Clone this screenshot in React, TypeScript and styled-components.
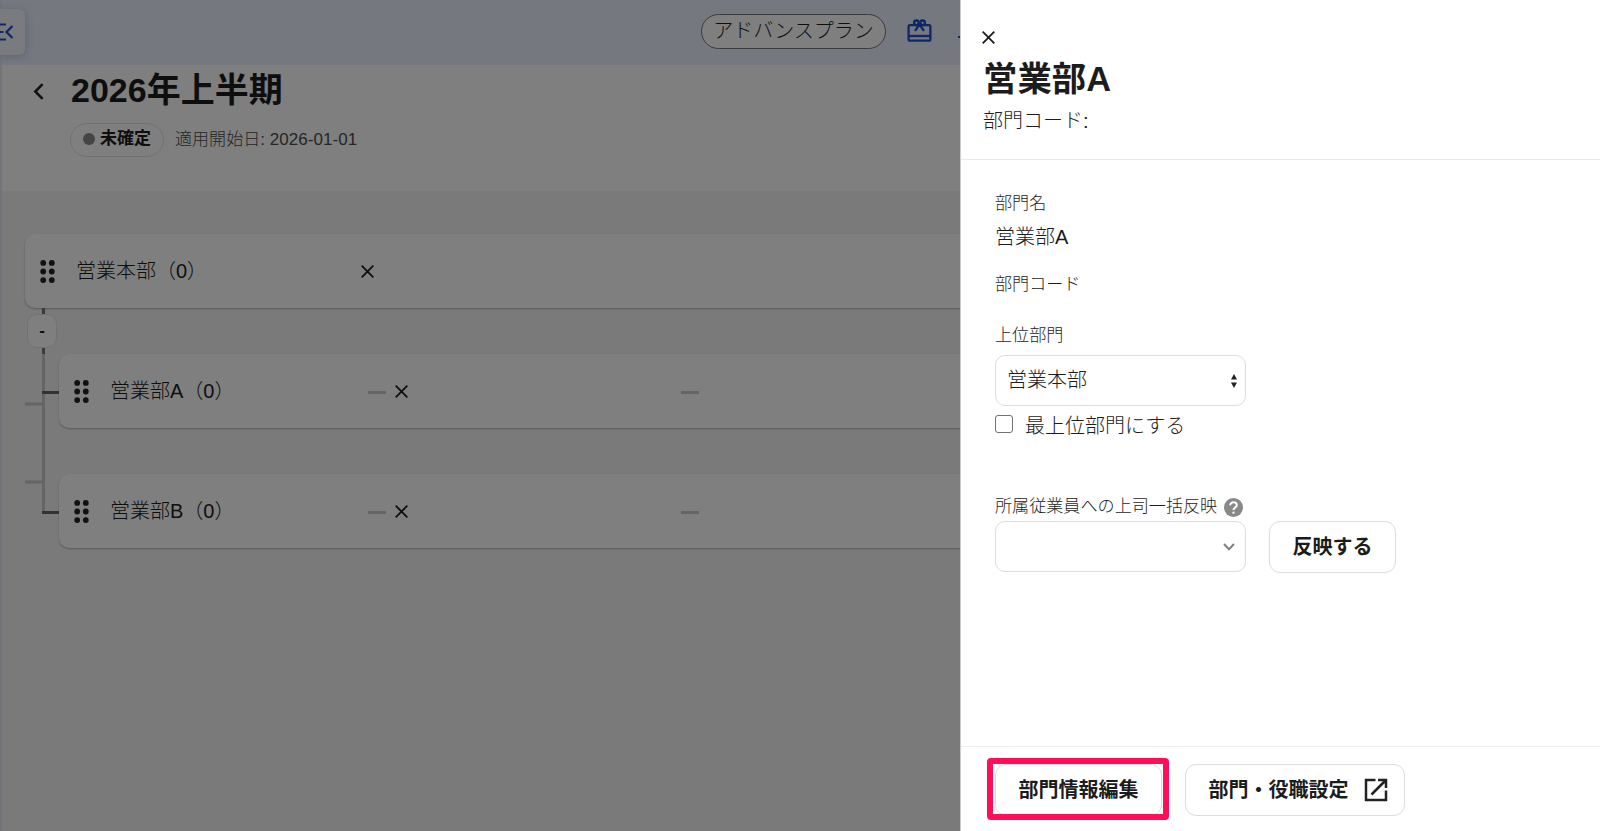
import React from 'react';
import styled, { createGlobalStyle } from 'styled-components';

const GlobalStyle = createGlobalStyle`
  * { box-sizing: border-box; }
  body {
    margin: 0;
    overflow: hidden;
    color: #1c1c1c;
    font-family: "Liberation Sans", "Noto Sans CJK JP", sans-serif;
    font-size: 20px;
    font-weight: 300;
  }
  h1, h2, p { margin: 0; }
  svg { display: block; flex: none; }
  button, select, input { font: inherit; color: inherit; }
`;

const Screen = styled.div`
  position: relative;
  height: 831px;
  overflow: hidden;
`;

const Page = styled.div`
  display: flex;
  flex-direction: column;
  height: 831px;
  background: #f4f4f4;
  border-left: 2px solid #e6e8f2;
`;

const TopBar = styled.header`
  display: flex;
  flex: none;
  align-items: flex-start;
  height: 65px;
  background: #eaf0ff;
`;

const MenuTab = styled.button`
  display: flex;
  align-items: center;
  width: 25px;
  height: 46px;
  margin: 9px 0 0 -2px;
  padding: 0;
  border: 0;
  border-radius: 0 6px 6px 0;
  background: #f5f7ff;
  box-shadow: 1px 2px 8px rgba(40, 50, 90, 0.2);
  overflow: hidden;
`;

const PlanBadge = styled.span`
  width: 185px;
  height: 35px;
  margin: 14px 0 0 676px;
  border: 1px solid #777;
  border-radius: 18px;
  background: #fff;
  line-height: 32px;
  text-align: center;
`;

const BarIcon = styled.span<{ $left: number; $top: number }>`
  flex: none;
  margin: ${(p) => p.$top}px 0 0 ${(p) => p.$left}px;
`;

const BarMark = styled.span`
  flex: none;
  width: 20px;
  height: 2px;
  margin: 36px 0 0 26px;
  background: #1b4ed0;
`;

const Heading = styled.section`
  display: flex;
  flex: none;
  height: 126px;
  padding: 1px 0 0 31px;
  background: #fff;
`;

const HeadingBody = styled.div`
  margin-left: 27px;
`;

const PeriodTitle = styled.h1`
  height: 48px;
  font-size: 34px;
  font-weight: 700;
  line-height: 48px;
`;

const BackIcon = styled.svg`
  margin-top: 17px;
`;

const Meta = styled.div`
  display: flex;
  align-items: center;
  gap: 11px;
  height: 34px;
  margin: 9px 0 0 -1px;
  color: #4c4c4c;
  font-size: 17px;
`;

const StartDate = styled.span`
  padding-bottom: 5px;
  letter-spacing: 0.05px;
`;

const StatusBadge = styled.span`
  display: flex;
  align-items: center;
  gap: 5px;
  width: 94px;
  height: 34px;
  padding: 0 0 2px 12px;
  border: 1px solid #e2e2e2;
  border-radius: 17px;
  color: #1c1c1c;
  font-weight: 700;
  line-height: 28px;

  &::before {
    content: '';
    width: 12px;
    height: 12px;
    border-radius: 50%;
    background: #8c8989;
  }
`;

const Tree = styled.main`
  padding: 43px 0 0 23px;
`;

const Branch = styled.div`
  display: flex;
`;

const Gutter = styled.div`
  width: 34px;
  padding-left: 2px;
`;

const Stub = styled.div`
  width: 3px;
  height: 6px;
  margin-left: 15px;
  background: #777;
`;

const Toggle = styled.button`
  display: block;
  width: 30px;
  height: 34px;
  padding: 0;
  border: 1px solid #e4e4e4;
  border-radius: 10px;
  background: #fff;
  font-size: 17px;
  font-weight: 700;
  line-height: 32px;
`;

const Connector = styled.svg`
  margin-left: -2px;
`;

const Children = styled.div`
  display: flex;
  flex: 1;
  flex-direction: column;
  gap: 46px;
  padding-top: 46px;
`;

const NodeCard = styled.div`
  display: flex;
  align-items: center;
  height: 74px;
  padding-left: 15px;
  border-radius: 10px;
  background: #fff;
  box-shadow: 0 1px 2px rgba(0, 0, 0, 0.28);
`;

const NodeName = styled.span<{ $width: number }>`
  width: ${(p) => p.$width}px;
  margin-left: 21px;
  line-height: 30px;
  padding-bottom: 1px;
`;

const Dash = styled.span<{ $left?: number }>`
  width: 18px;
  height: 3px;
  margin: 2px 0 0 ${(p) => p.$left ?? 0}px;
  background: #cacaca;
`;

const RemoveIcon = styled.span<{ $left?: number }>`
  margin-left: ${(p) => p.$left ?? 0}px;
`;

const Backdrop = styled.div`
  position: absolute;
  inset: 0;
  background: rgba(0, 0, 0, 0.5);
`;

const Drawer = styled.aside`
  position: absolute;
  top: 0;
  right: 0;
  display: flex;
  flex-direction: column;
  width: 640px;
  height: 831px;
  border-left: 1px solid #ccc;
  background: #fff;
`;

const DrawerHead = styled.header`
  flex: none;
  height: 160px;
  padding: 31px 0 0 21px;
  border-bottom: 1px solid #e9e9e9;
`;

const DrawerTitle = styled.h2`
  margin: 10px 0 0 1px;
  font-size: 34.4px;
  font-weight: 700;
  line-height: 50px;
`;

const DrawerCode = styled.p`
  margin: 2px 0 0 1px;
  line-height: 30px;
`;

const DrawerBody = styled.div`
  flex: 1;
  padding: 31px 0 0 34px;
`;

const Label = styled.div<{ $top?: number }>`
  display: flex;
  align-items: center;
  gap: 7px;
  height: 26px;
  margin-top: ${(p) => p.$top ?? 0}px;
  font-size: 17.1px;
  line-height: 26px;
`;

const Value = styled.p`
  margin-top: 5px;
  line-height: 30px;
`;

const SelectBox = styled.div<{ $end: number; $top: number }>`
  display: flex;
  align-items: center;
  justify-content: space-between;
  width: 251px;
  height: 51px;
  margin-top: ${(p) => p.$top}px;
  padding: 0 ${(p) => p.$end}px 0 11px;
  border: 1px solid #ddd;
  border-radius: 10px;
  line-height: 46px;

  span { padding-bottom: 2px; }
`;

const CheckLine = styled.label`
  display: flex;
  align-items: center;
  gap: 12px;
  height: 30px;
  margin-top: 5px;
  line-height: 30px;
`;

const Checkbox = styled.input`
  appearance: none;
  width: 18px;
  height: 18px;
  margin: 0 0 4px;
  border: 1.5px solid #707070;
  border-radius: 3px;
`;

const ApplyLine = styled.div`
  display: flex;
  gap: 23px;
  margin-top: 1px;
`;

const Button = styled.button<{ $width: number; $shift?: number }>`
  display: flex;
  align-items: center;
  justify-content: center;
  gap: 15px;
  width: ${(p) => p.$width}px;
  height: 52px;
  padding: 0 0 1px ${(p) => p.$shift ?? 0}px;
  border: 1px solid #ddd;
  border-radius: 11px;
  background: #fff;
  font-weight: 700;
  line-height: 30px;
`;

const DrawerFoot = styled.footer`
  display: flex;
  flex: none;
  align-items: flex-start;
  gap: 23px;
  height: 85px;
  padding: 17px 0 0 34px;
  border-top: 1px solid #eee;
`;

const Highlight = styled.div`
  position: relative;

  &::after {
    content: '';
    position: absolute;
    inset: -6px -7px -4px -8px;
    border: 6px solid #ff0f57;
    border-radius: 4px;
  }
`;

const Cross = () => (
  <svg width="13" height="13" viewBox="0 0 13 13" stroke="#1c1c1c" strokeWidth="1.8">
    <path d="M.7.7 12.3 12.3M12.3.7.7 12.3" />
  </svg>
);

const Grip = () => (
  <svg width="15" height="23" viewBox="0 0 15 23" fill="#222">
    {[2.9, 11.5, 20.1].map((y) => (
      <React.Fragment key={y}>
        <circle cx="3.2" cy={y} r="2.9" />
        <circle cx="11.8" cy={y} r="2.9" />
      </React.Fragment>
    ))}
  </svg>
);

const ChildNode = ({ name }: { name: string }) => (
  <NodeCard>
    <Grip />
    <NodeName $width={258}>{name}</NodeName>
    <Dash />
    <RemoveIcon $left={9}>
      <Cross />
    </RemoveIcon>
    <Dash $left={273} />
  </NodeCard>
);

export default function App() {
  return (
    <Screen>
      <GlobalStyle />
      <Page>
        <TopBar>
          <MenuTab aria-label="メニュー">
            <svg width="14" height="18" viewBox="0 0 14 18" fill="none" stroke="#1b4ed0" strokeWidth="2.2">
              <path d="M0 1.5H6M0 9H3.5M0 16.5H6M12.5 3 6.5 9l6 6" />
            </svg>
          </MenuTab>
          <PlanBadge>アドバンスプラン</PlanBadge>
          <BarIcon $left={21} $top={19}>
            <svg width="25" height="24" viewBox="0 0 25 24" fill="none" stroke="#1b4ed0" strokeWidth="2.3">
              <rect x="1.6" y="6.2" width="21.8" height="15.5" rx="1.5" />
              <path d="M1.6 17H23.4" />
              <circle cx="9.4" cy="3.8" r="2.3" />
              <circle cx="15.6" cy="3.8" r="2.3" />
              <path d="M12.5 5.5 8 11.8M12.5 5.5 17 11.8" />
            </svg>
          </BarIcon>
          <BarMark />
        </TopBar>
        <Heading>
          <BackIcon width="11" height="17" viewBox="0 0 11 17" fill="none" stroke="#222" strokeWidth="2.6">
            <path d="M9.6 1.2 2.3 8.5l7.3 7.3" />
          </BackIcon>
          <HeadingBody>
            <PeriodTitle>2026年上半期</PeriodTitle>
            <Meta>
              <StatusBadge>未確定</StatusBadge>
              <StartDate>適用開始日: 2026-01-01</StartDate>
            </Meta>
          </HeadingBody>
        </Heading>
        <Tree>
          <NodeCard>
            <Grip />
            <NodeName $width={285}>営業本部（0）</NodeName>
            <Cross />
          </NodeCard>
          <Branch>
            <Gutter>
              <Stub />
              <Toggle>-</Toggle>
              <Stub />
              <Connector width="34" height="162" viewBox="0 0 34 162" fill="none" strokeWidth="3">
                <path d="M18.5 0V157M0 50H17M0 128H17" stroke="#cacaca" />
                <path d="M17 38.5H34M17 158.5H34" stroke="#666" />
              </Connector>
            </Gutter>
            <Children>
              <ChildNode name="営業部A（0）" />
              <ChildNode name="営業部B（0）" />
            </Children>
          </Branch>
        </Tree>
      </Page>
      <Backdrop />
      <Drawer>
        <DrawerHead>
          <Cross />
          <DrawerTitle>営業部A</DrawerTitle>
          <DrawerCode>部門コード:</DrawerCode>
        </DrawerHead>
        <DrawerBody>
          <Label>部門名</Label>
          <Value>営業部A</Value>
          <Label $top={20}>部門コード</Label>
          <Label $top={25}>上位部門</Label>
          <SelectBox $end={8} $top={6}>
            <span>営業本部</span>
            <svg width="6" height="14" viewBox="0 0 6 14" fill="#222">
              <path d="M3 0 6 5.5H0zM3 14 0 8.5H6z" />
            </svg>
          </SelectBox>
          <CheckLine>
            <Checkbox type="checkbox" />
            最上位部門にする
          </CheckLine>
          <Label $top={53}>
            所属従業員への上司一括反映
            <svg width="19" height="19" viewBox="0 0 19 19" fill="none" stroke="#fff" strokeWidth="2">
              <circle cx="9.5" cy="9.5" r="9.5" fill="#888" stroke="none" />
              <path d="M6.2 7.3C6.2 3 12.8 3.2 12.8 7.2 12.8 9.4 9.5 9.5 9.5 12.1" />
              <path d="M9.5 13.6V15.7" />
            </svg>
          </Label>
          <ApplyLine>
            <SelectBox $end={10} $top={0}>
              <span />
              <svg width="12" height="8" viewBox="0 0 12 8" fill="none" stroke="#808080" strokeWidth="2">
                <path d="M1 1 6 6.2 11 1" />
              </svg>
            </SelectBox>
            <Button $width={127}>反映する</Button>
          </ApplyLine>
        </DrawerBody>
        <DrawerFoot>
          <Highlight>
            <Button $width={167}>部門情報編集</Button>
          </Highlight>
          <Button $width={220} $shift={6}>
            <span>部門・役職設定</span>
            <svg width="24" height="24" viewBox="0 0 24 24" fill="none" stroke="#222" strokeWidth="2.5">
              <path d="M11.5 2H2V22H22V12.5M14 2H22V10M22 2 7.5 16.5" />
            </svg>
          </Button>
        </DrawerFoot>
      </Drawer>
    </Screen>
  );
}
